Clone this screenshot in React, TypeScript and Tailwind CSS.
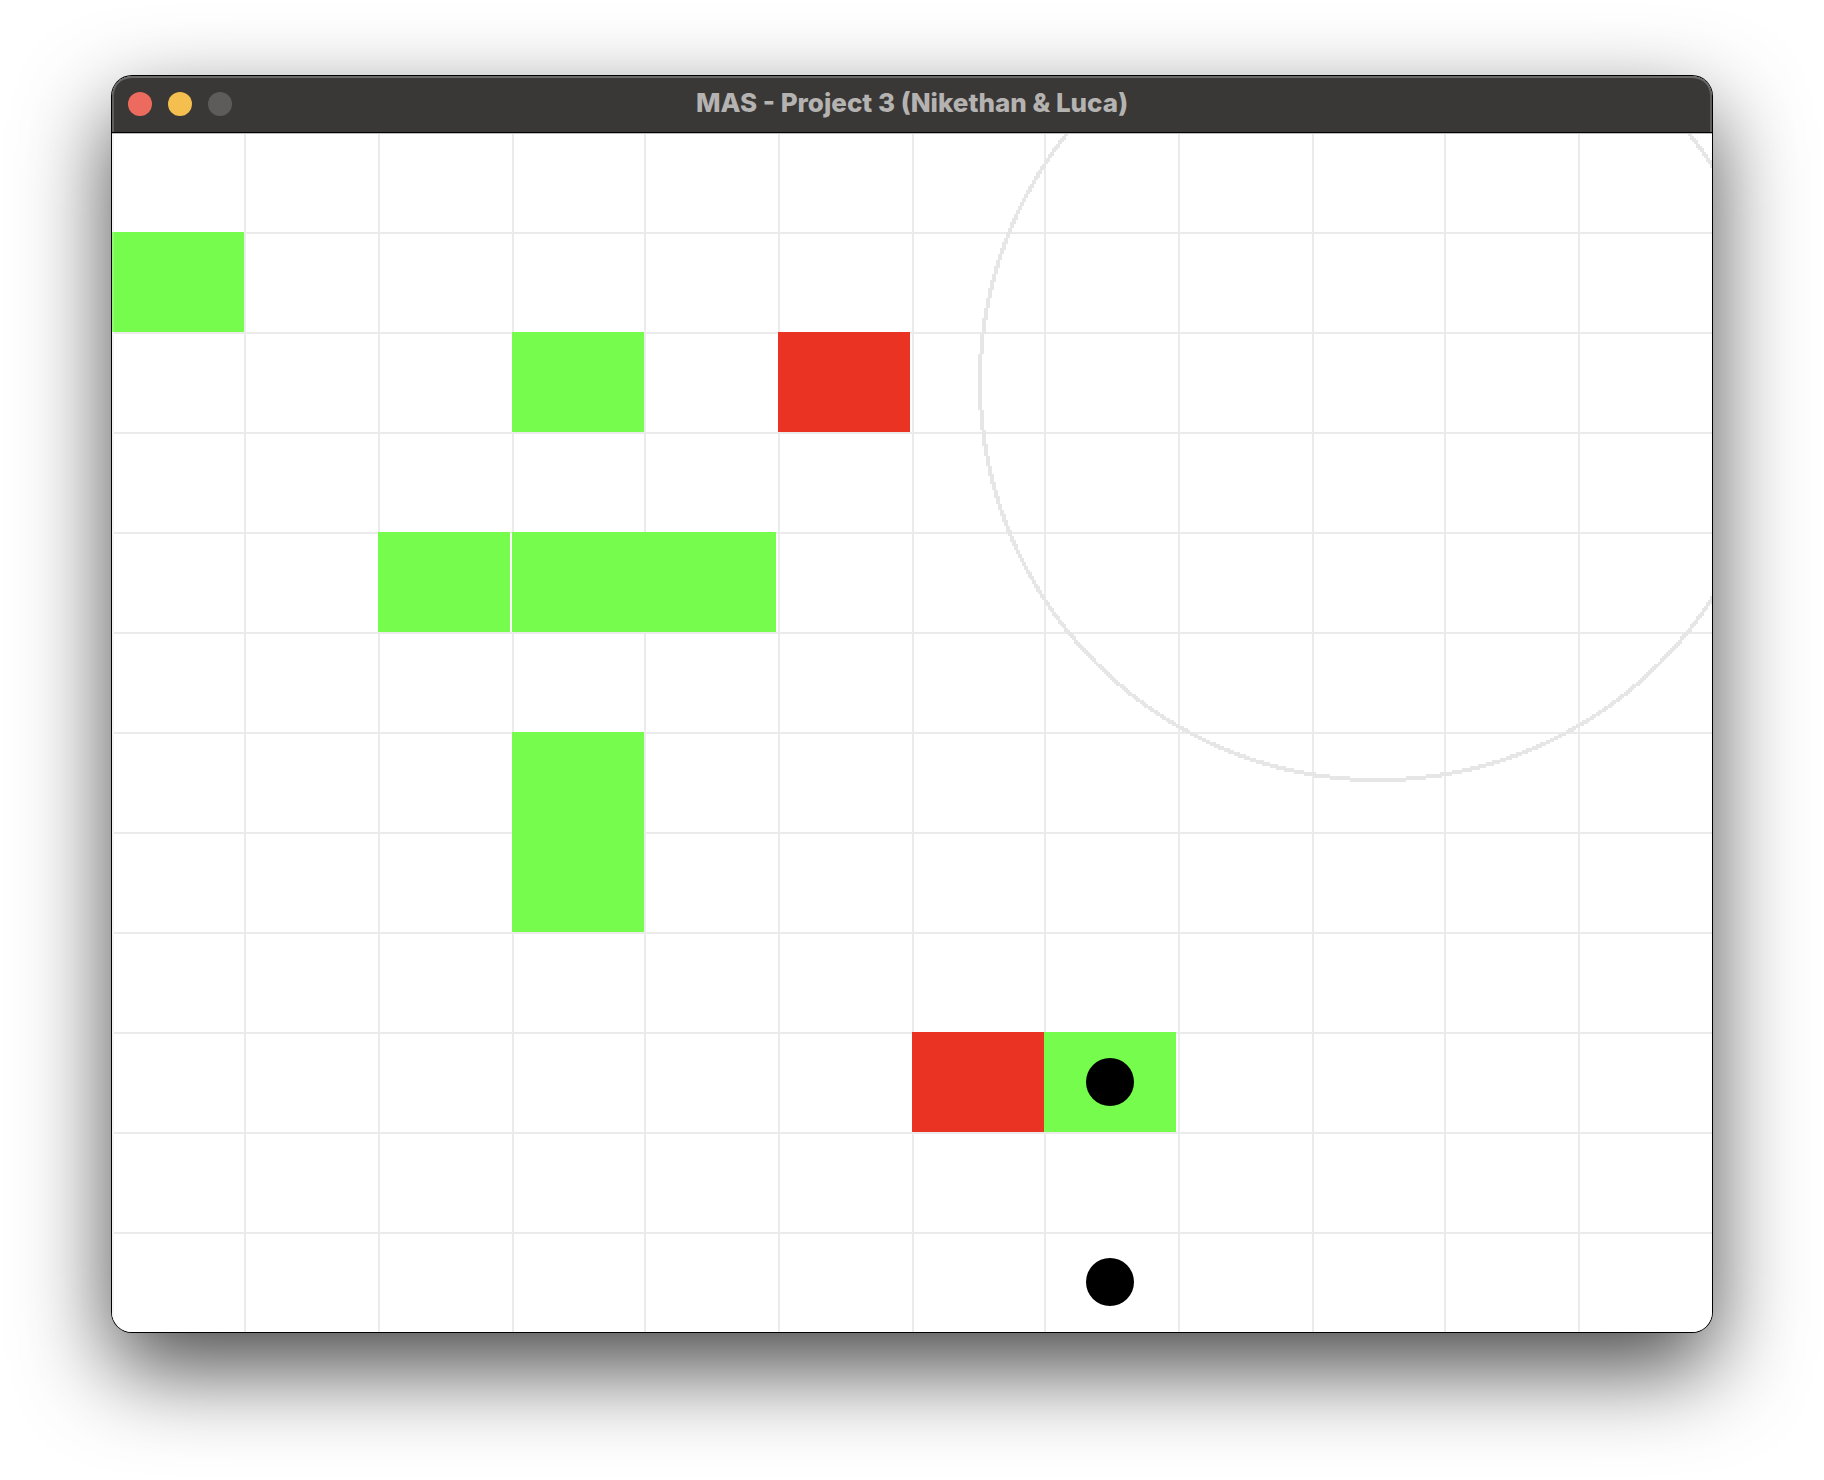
const COLS = 12;
const ROWS = 12;
const WIDTH = 800;
const HEIGHT = 600;
const CELL_W = 66;
const CELL_H = 50;

const colX = (col: number) => Math.floor((col * WIDTH) / COLS);

const range = (n: number) => Array.from({ length: n }, (_, i) => i);

const goals: [number, number][] = [
  [0, 1],
  [3, 2],
  [2, 4],
  [3, 4],
  [4, 4],
  [3, 6],
  [3, 7],
  [7, 9],
];

const walls: [number, number][] = [
  [5, 2],
  [6, 9],
];

const agents: [number, number][] = [
  [7, 9],
  [7, 11],
];

// Number of whole pixels right of the centre that a disc covers on one row.
const reach = (radius: number, row: number) => {
  const y = row + 0.5;
  return y > radius ? 0 : Math.floor(Math.sqrt(radius * radius - y * y) + 0.5);
};

const run = (x: number, y: number, w: number) => `M${x} ${y}h${w}v1h${-w}z`;

// Unsmoothed ring of the given thickness, built from pixel runs on each row.
function ring(cx: number, cy: number, radius: number, thickness: number) {
  return range(radius)
    .map((row) => {
      const outer = reach(radius, row);
      const inner = reach(radius - thickness, row);
      const w = outer - inner;
      return [cy + row, cy - row - 1]
        .map((y) => run(cx - outer, y, w) + run(cx + inner, y, w))
        .join("");
    })
    .join("");
}

function Board() {
  return (
    <svg
      viewBox={`0 0 ${WIDTH} ${HEIGHT}`}
      className="block aspect-[4/3] w-full bg-white"
      role="img"
      aria-label="Simulation grid"
    >
      <g fill="#ebebeb">
        {range(COLS).map((c) => (
          <rect key={`c${c}`} x={colX(c)} y={0} width={1} height={HEIGHT} opacity={c ? 1 : 0.6} />
        ))}
        {range(ROWS - 1).map((r) => (
          <rect key={`r${r}`} x={1} y={(r + 1) * CELL_H} width={WIDTH} height={1} />
        ))}
      </g>
      <g fill="#75fc4c">
        {goals.map(([c, r]) => (
          <rect key={`${c}-${r}`} x={colX(c)} y={r * CELL_H} width={CELL_W} height={CELL_H} />
        ))}
      </g>
      <g fill="#ea3323">
        {walls.map(([c, r]) => (
          <rect key={`${c}-${r}`} x={colX(c)} y={r * CELL_H} width={CELL_W} height={CELL_H} />
        ))}
      </g>
      <path d={ring(633, 125, 200, 2)} fill="#e6e6e6" />
      {agents.map(([c, r]) => (
        <circle key={`${c}-${r}`} cx={colX(c) + 33} cy={r * CELL_H + 25} r={12} fill="#000" />
      ))}
      <rect width={1} height={HEIGHT} fill="#fff" opacity={0.2} />
      <rect width={WIDTH} height={0.5} fill="#000" />
      <rect y={0.5} width={WIDTH} height={0.5} fill="#bdbcbb" />
    </svg>
  );
}

function TitleBar() {
  return (
    <header className="grid h-14 grid-cols-[1fr_auto_1fr] items-center rounded-t-[20px] bg-[#3a3836] px-4 shadow-[inset_0_2px_0_#6b6a69,inset_2px_0_0_#5f5e5d,inset_-2px_0_0_#5f5e5d]">
      <div className="flex gap-4">
        <button type="button" aria-label="Close" className="size-6 rounded-full bg-[#ed6a5e]" />
        <button type="button" aria-label="Minimize" className="size-6 rounded-full bg-[#f5bf4f]" />
        <button type="button" aria-label="Zoom" disabled className="size-6 rounded-full bg-[#5d5c5a]" />
      </div>
      <h1 className="pb-0.5 font-[Inter,sans-serif] text-[26px] leading-8 font-extrabold text-[#b4b3b1]">
        MAS - Project 3 (Nikethan &amp; Luca)
      </h1>
    </header>
  );
}

export default function App() {
  return (
    <main className="min-h-screen overflow-hidden bg-white px-28 pt-[76px] pb-[148px]">
      <section className="rounded-[20px] shadow-[0_0_0_1px_#000,0_36px_90px_rgba(0,0,0,0.72)]">
        <div className="overflow-hidden rounded-[20px]">
          <TitleBar />
          <Board />
        </div>
      </section>
    </main>
  );
}
